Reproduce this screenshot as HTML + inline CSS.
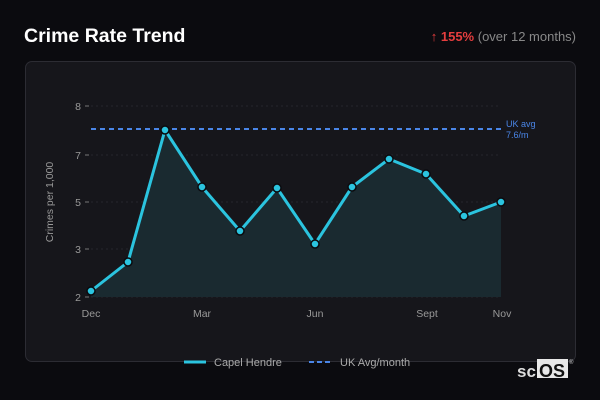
<!DOCTYPE html>
<html><head><style>
body{margin:0;width:600px;height:400px;background:#0b0b0f;font-family:"Liberation Sans","DejaVu Sans",sans-serif;position:relative;overflow:hidden}
.t{position:absolute;left:24px;top:25px;font-size:19.5px;font-weight:bold;color:#fff;font-family:"Liberation Sans",sans-serif}
.r{position:absolute;right:24px;top:29px;font-size:13px;color:#888;font-family:"Liberation Sans",sans-serif}
.r b{color:#e53e3e}
.card{position:absolute;left:25px;top:61px;width:549px;height:299px;background:#16161b;border:1px solid #2c2c33;border-radius:7px}
svg{position:absolute;left:0;top:0}
</style></head><body>
<div class="t">Crime Rate Trend</div>
<div class="r"><b>↑ 155%</b> (over 12 months)</div>
<div class="card"></div>
<svg width="600" height="400" font-family="Liberation Sans,sans-serif">
<g stroke="#26262c" stroke-dasharray="2 3">
<line x1="91" x2="501" y1="106" y2="106"/><line x1="91" x2="501" y1="155" y2="155"/><line x1="91" x2="501" y1="202" y2="202"/><line x1="91" x2="501" y1="249" y2="249"/><line x1="91" x2="501" y1="297" y2="297"/>
</g>
<g fill="#999" font-size="10.5" text-anchor="end">
<text x="81" y="110">8</text><text x="81" y="159">7</text><text x="81" y="206">5</text><text x="81" y="253">3</text><text x="81" y="301">2</text>
</g>
<g stroke="#777"><line x1="85" x2="89" y1="106" y2="106"/><line x1="85" x2="89" y1="155" y2="155"/><line x1="85" x2="89" y1="202" y2="202"/><line x1="85" x2="89" y1="249" y2="249"/><line x1="85" x2="89" y1="297" y2="297"/></g>
<text transform="translate(53,202) rotate(-90)" fill="#999" font-size="10.5" text-anchor="middle">Crimes per 1,000</text>
<g fill="#999" font-size="10.5" text-anchor="middle">
<text x="91" y="317">Dec</text><text x="202" y="317">Mar</text><text x="315" y="317">Jun</text><text x="427" y="317">Sept</text><text x="502" y="317">Nov</text>
</g>
<path d="M91 291L128 262L165 130L202 187L240 231L277 188L315 244L352 187L389 159L426 174L464 216L501 202L501 297L91 297Z" fill="#1a2a30"/>
<line x1="91" x2="501" y1="129" y2="129" stroke="#4a86e8" stroke-width="2" stroke-dasharray="5 4"/>
<text x="506" y="127" fill="#4a86e8" font-size="9">UK avg</text>
<text x="506" y="138" fill="#4a86e8" font-size="9">7.6/m</text>
<polyline points="91,291 128,262 165,130 202,187 240,231 277,188 315,244 352,187 389,159 426,174 464,216 501,202" fill="none" stroke="#2bc4df" stroke-width="3" stroke-linejoin="round"/>
<g fill="#2bc4df" stroke="#0b0b0f" stroke-width="1.5">
<circle cx="91" cy="291" r="4"/><circle cx="128" cy="262" r="4"/><circle cx="165" cy="130" r="4"/><circle cx="202" cy="187" r="4"/><circle cx="240" cy="231" r="4"/><circle cx="277" cy="188" r="4"/><circle cx="315" cy="244" r="4"/><circle cx="352" cy="187" r="4"/><circle cx="389" cy="159" r="4"/><circle cx="426" cy="174" r="4"/><circle cx="464" cy="216" r="4"/><circle cx="501" cy="202" r="4"/>
</g>
<line x1="184" x2="206" y1="362" y2="362" stroke="#2bc4df" stroke-width="3"/>
<text x="214" y="366" fill="#aaa" font-size="11">Capel Hendre</text>
<line x1="309" x2="332" y1="362" y2="362" stroke="#4a86e8" stroke-width="2" stroke-dasharray="5 3"/>
<text x="340" y="366" fill="#aaa" font-size="11">UK Avg/month</text>
<text x="517" y="377" fill="#ddd" font-size="17" font-weight="bold">sc</text>
<rect x="537" y="359" width="31" height="19" fill="#e8e8e8"/>
<text x="539" y="377" fill="#111" font-size="18" font-weight="bold">OS</text>
<text x="569" y="364" fill="#ccc" font-size="6">®</text>
</svg>
</body></html>
